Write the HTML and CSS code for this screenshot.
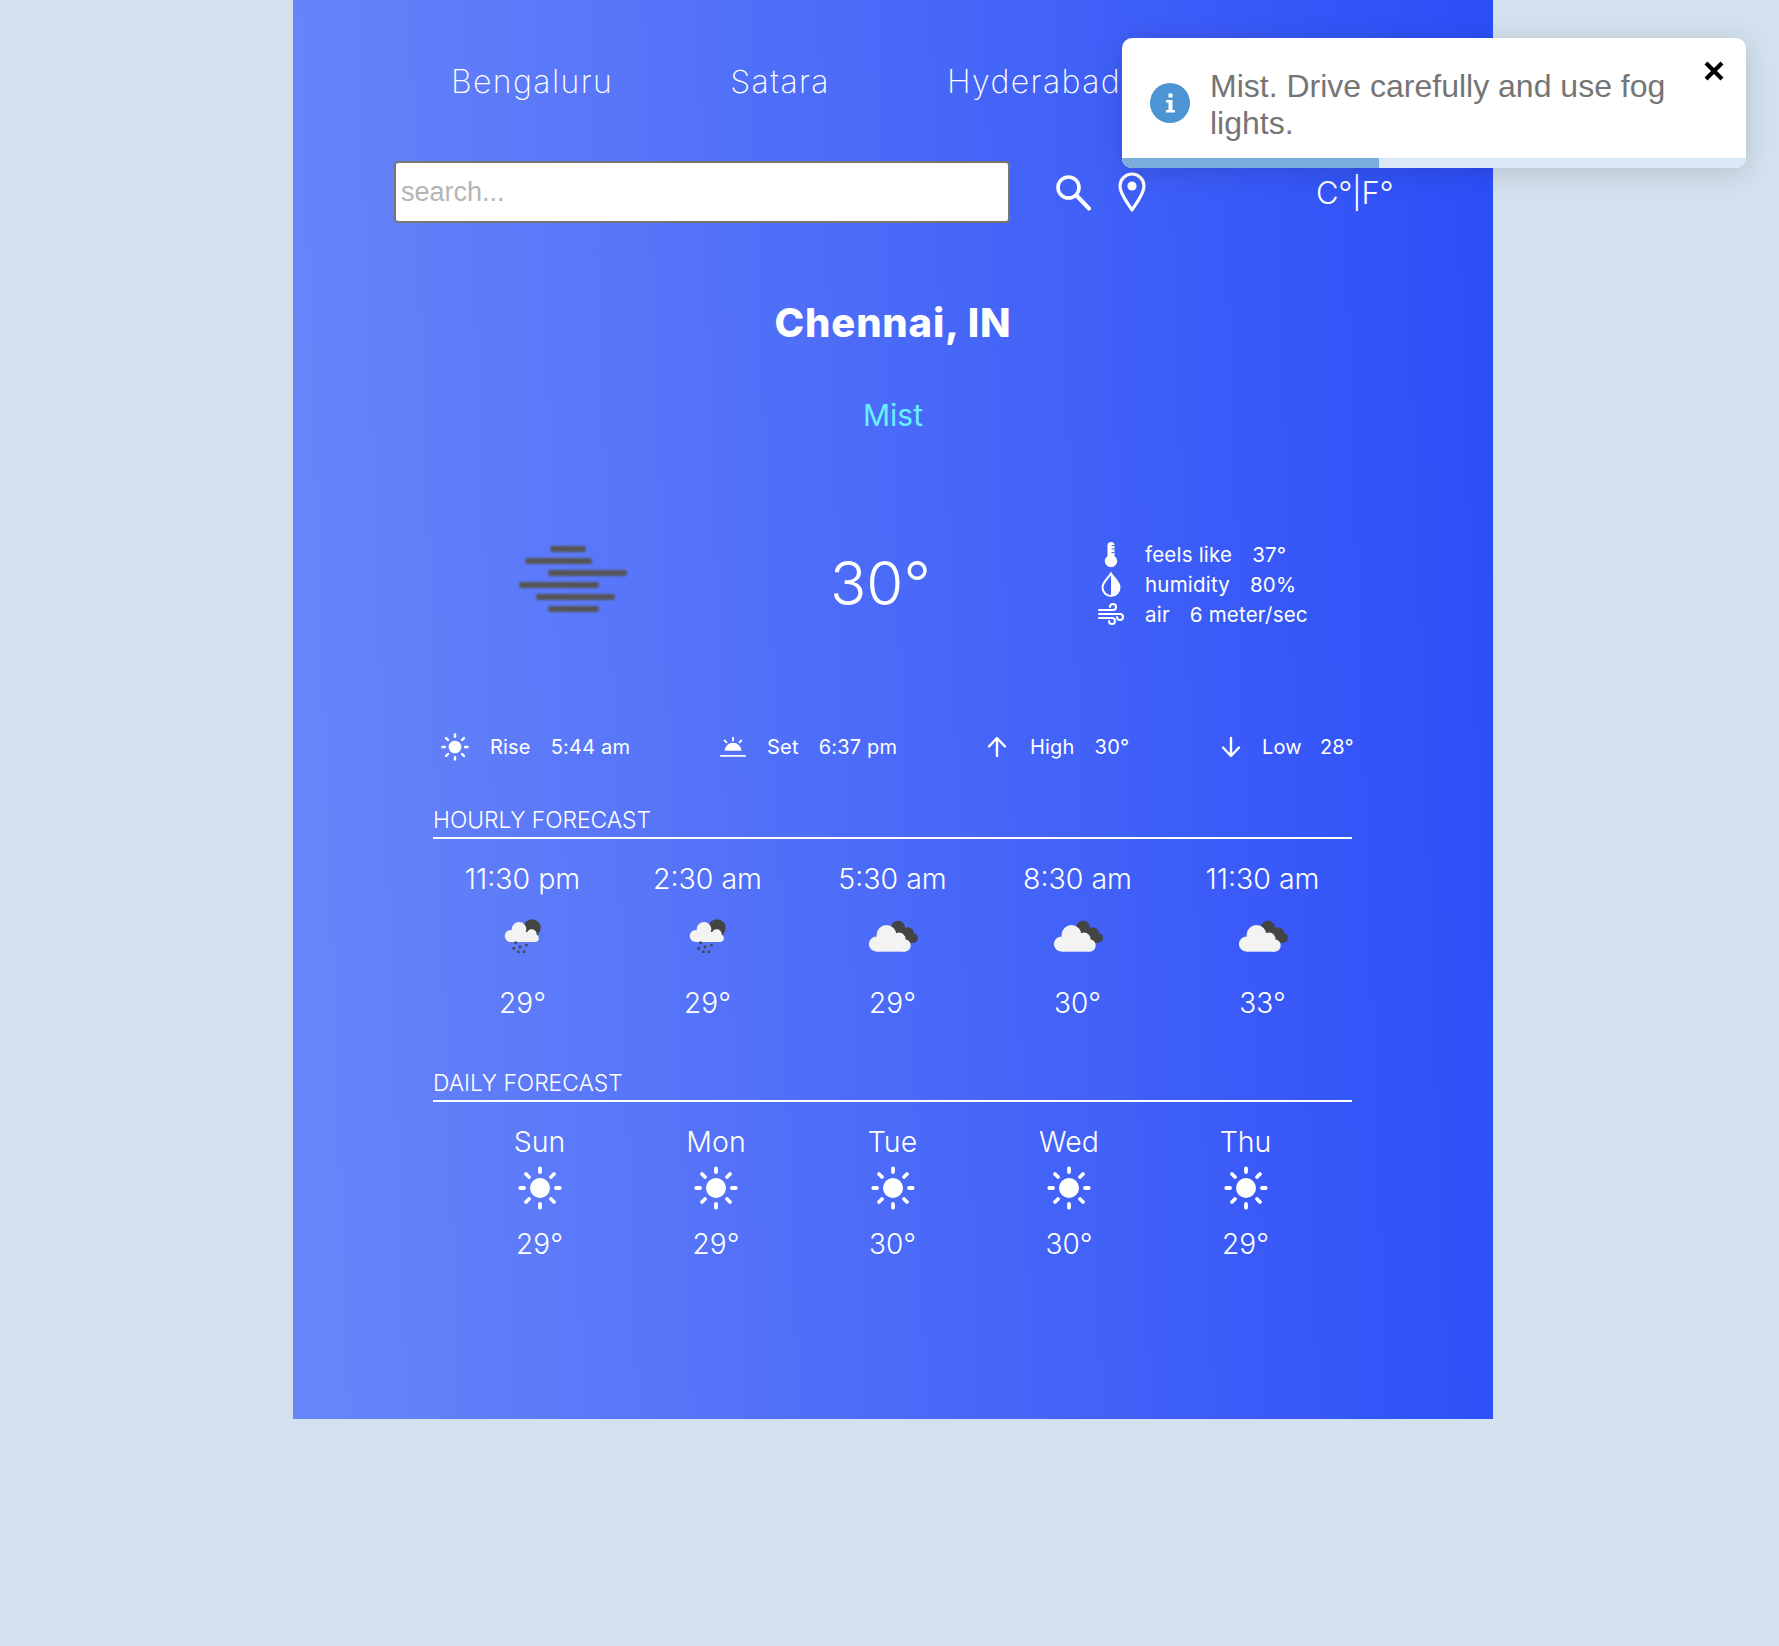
FILE: index.html
```html
<!DOCTYPE html>
<html lang="en">
<head>
<meta charset="utf-8">
<title>Weather</title>
<link rel="stylesheet" href="styles.css">
</head>
<body>
<svg class="defs" width="0" height="0" aria-hidden="true">
  <defs>
    <g id="sun">
      <circle cx="22" cy="22" r="10" fill="#fff"/>
      <path d="M22 2.300v3.700M22 38v3.700M2.300 22H6M38 22h3.700M8 8l3 3M36 8l-3 3M8 36l3-3M36 36l-3-3" stroke="#fff" stroke-width="3.800" stroke-linecap="round" fill="none"/>
    </g>
    <g id="cloudrain">
      <circle cx="34" cy="22" r="8.700" fill="#444"/>
      <g fill="#f3f3f3">
        <circle cx="12.700" cy="30" r="6"/>
        <circle cx="21" cy="23.300" r="7.300"/>
        <circle cx="33.700" cy="28.300" r="5"/>
        <circle cx="37" cy="32.300" r="3.800"/>
        <rect x="12.700" y="26" width="24" height="10"/>
      </g>
      <g fill="#444">
        <rect x="16.500" y="35.500" width="2.400" height="2.600"/>
        <rect x="14.500" y="41" width="2.400" height="2.800"/>
        <rect x="20.800" y="39.500" width="2.400" height="2.800"/>
        <rect x="27.200" y="38" width="2.400" height="2.400"/>
        <rect x="19.200" y="44.600" width="2.400" height="2.400"/>
        <rect x="24.800" y="44.600" width="2.400" height="2.400"/>
      </g>
    </g>
    <g id="clouds">
      <g fill="#444">
        <circle cx="30" cy="21.700" r="7"/>
        <circle cx="40" cy="27.300" r="6"/>
        <circle cx="45" cy="32" r="5"/>
        <rect x="26" y="24" width="19" height="13"/>
      </g>
      <g fill="#f3f3f3">
        <circle cx="8.500" cy="38" r="7.600"/>
        <circle cx="18.500" cy="29" r="10"/>
        <circle cx="31" cy="33" r="6.500"/>
        <circle cx="36.500" cy="39.500" r="6.200"/>
        <rect x="8.500" y="33" width="28" height="12.700"/>
      </g>
    </g>
  </defs>
</svg>
<main class="panel">
  <nav class="tabs">
    <span>Bengaluru</span>
    <span>Satara</span>
    <span>Hyderabad</span>
  </nav>
  <section class="search-row">
    <input class="search" type="text" placeholder="search...">
    <div class="search-icons">
      <svg width="38" height="38" viewBox="0 0 38 38" fill="none" stroke="#fff" stroke-width="3.600" stroke-linecap="round"><circle cx="14.500" cy="14.500" r="10.500"/><path d="M22.500 22.500 35 35.500" stroke-width="4"/></svg>
      <svg width="30" height="40" viewBox="0 0 30 40" fill="none"><path d="M15 38C10 30 3 22 3 14a12 12 0 0 1 24 0c0 8-7 16-12 24z" stroke="#fff" stroke-width="3.200" stroke-linejoin="round"/><circle cx="15" cy="14" r="4.600" fill="#fff"/></svg>
    </div>
    <div class="units">C°|F°</div>
  </section>
  <h1 class="city">Chennai, IN</h1>
  <p class="condition">Mist</p>
  <section class="current">
    <div class="mist" aria-hidden="true">
      <i class="b1"></i><i class="b2"></i><i class="b3"></i><i class="b4"></i><i class="b5"></i><i class="b6"></i>
    </div>
    <div class="temp">30°</div>
    <ul class="details">
      <li><svg width="26" height="26" viewBox="0 0 26 26"><path d="M9.500 4.500a3.500 3.500 0 0 1 7 0v10.400a6.200 6.200 0 1 1-7 0z" fill="#fff"/><path d="M13.500 4.500h3M13.500 8h3M13.500 11.500h3" stroke="#3f60f7" stroke-width="1.200"/></svg><span>feels like</span><span>37°</span></li>
      <li><svg width="26" height="26" viewBox="0 0 26 26"><path d="M13 2.500C10 7.500 4.500 11 4.500 16.500a8.500 8.500 0 0 0 17 0C21.500 11 16 7.500 13 2.500z" fill="none" stroke="#fff" stroke-width="2"/><path d="M13 2.500C16 7.500 21.500 11 21.500 16.500A8.500 8.500 0 0 1 13 25z" fill="#fff"/></svg><span>humidity</span><span>80%</span></li>
      <li><svg width="26" height="22" viewBox="0 0 26 22" fill="none" stroke="#fff" stroke-width="2" stroke-linecap="round"><path d="M1 7h14a3 3 0 1 0-3-3M1 11h21a3 3 0 1 1-3 3M1 15h13a3 3 0 1 1-3 3"/></svg><span>air</span><span>6 meter/sec</span></li>
    </ul>
  </section>
  <section class="sunrow">
    <div class="stat s1"><svg width="28" height="28" viewBox="0 0 44 44"><use href="#sun"/></svg><span>Rise</span><span>5:44 am</span></div>
    <div class="stat s2"><svg width="26" height="24" viewBox="0 0 28 24" fill="none" stroke="#fff" stroke-linecap="round"><path d="M5 16a9 8.500 0 0 1 18 0z" fill="#fff" stroke="none"/><path d="M1 21.500h26" stroke-width="2"/><path d="M14 2v3M5 5l2 2M23 5l-2 2" stroke-width="2"/></svg><span>Set</span><span>6:37 pm</span></div>
    <div class="stat s3"><svg width="24" height="24" viewBox="0 0 24 24" fill="none" stroke="#fff" stroke-width="2.400" stroke-linecap="round" stroke-linejoin="round"><path d="M12 21V4M4 11.500 12 3l8 8.500"/></svg><span>High</span><span>30°</span></div>
    <div class="stat s4"><svg width="24" height="24" viewBox="0 0 24 24" fill="none" stroke="#fff" stroke-width="2.400" stroke-linecap="round" stroke-linejoin="round"><path d="M12 3v17M4 12.500 12 21l8-8.500"/></svg><span>Low</span><span>28°</span></div>
  </section>
  <section class="forecast hourly">
    <h2>HOURLY FORECAST</h2>
    <div class="fc-row">
      <div class="fc-item"><div class="fc-label">11:30 pm</div><svg class="fc-icon" width="50" height="50" viewBox="0 0 50 50"><use href="#cloudrain"/></svg><div class="fc-temp">29°</div></div>
      <div class="fc-item"><div class="fc-label">2:30 am</div><svg class="fc-icon" width="50" height="50" viewBox="0 0 50 50"><use href="#cloudrain"/></svg><div class="fc-temp">29°</div></div>
      <div class="fc-item"><div class="fc-label">5:30 am</div><svg class="fc-icon" width="50" height="50" viewBox="0 0 50 50"><use href="#clouds"/></svg><div class="fc-temp">29°</div></div>
      <div class="fc-item"><div class="fc-label">8:30 am</div><svg class="fc-icon" width="50" height="50" viewBox="0 0 50 50"><use href="#clouds"/></svg><div class="fc-temp">30°</div></div>
      <div class="fc-item"><div class="fc-label">11:30 am</div><svg class="fc-icon" width="50" height="50" viewBox="0 0 50 50"><use href="#clouds"/></svg><div class="fc-temp">33°</div></div>
    </div>
  </section>
  <section class="forecast daily">
    <h2>DAILY FORECAST</h2>
    <div class="fc-row tight">
      <div class="fc-item"><div class="fc-label">Sun</div><svg class="fc-sun" width="44" height="44" viewBox="0 0 44 44"><use href="#sun"/></svg><div class="fc-temp">29°</div></div>
      <div class="fc-item"><div class="fc-label">Mon</div><svg class="fc-sun" width="44" height="44" viewBox="0 0 44 44"><use href="#sun"/></svg><div class="fc-temp">29°</div></div>
      <div class="fc-item"><div class="fc-label">Tue</div><svg class="fc-sun" width="44" height="44" viewBox="0 0 44 44"><use href="#sun"/></svg><div class="fc-temp">30°</div></div>
      <div class="fc-item"><div class="fc-label">Wed</div><svg class="fc-sun" width="44" height="44" viewBox="0 0 44 44"><use href="#sun"/></svg><div class="fc-temp">30°</div></div>
      <div class="fc-item"><div class="fc-label">Thu</div><svg class="fc-sun" width="44" height="44" viewBox="0 0 44 44"><use href="#sun"/></svg><div class="fc-temp">29°</div></div>
    </div>
  </section>
</main>
<aside class="toast" role="alert">
  <div class="toast-body">
    <svg class="toast-icon" width="40" height="40" viewBox="0 0 40 40"><circle cx="20" cy="20" r="20" fill="#4d94d5"/><path d="M16 17h6.500v10H25v2.500h-9V27h2.500v-7.500H16zM18.500 10.500h4v4h-4z" fill="#fff"/></svg>
    <p>Mist. Drive carefully and use fog lights.</p>
    <svg class="toast-close" width="24" height="24" viewBox="0 0 24 24"><path d="M4 4l16 16M20 4 4 20" stroke="#000" stroke-width="4.200"/></svg>
  </div>
  <div class="toast-track"><div class="toast-bar" style="width:41.2%"></div></div>
</aside>
</body>
</html>
```
FILE: styles.css
```css
* { box-sizing: border-box; }
html, body { margin: 0; padding: 0; }
body {
  min-height: 1646px;
  background: #d3e1ee;
  font-family: "Inter", "Liberation Sans", sans-serif;
  color: #fff;
  overflow: hidden;
}
.defs { position: absolute; }
.panel {
  width: 1200px;
  height: 1419px;
  margin-left: 293px;
  padding-top: 57px;
  background: linear-gradient(88deg, #6986f9 0%, #2c4ef7 100%);
}
.tabs {
  display: flex;
  gap: 117px;
  height: 48px;
  align-items: center;
  padding-left: 158px;
  font-size: 32px;
  font-weight: 200;
  letter-spacing: 1.400px;
  white-space: nowrap;
}
.search-row {
  display: flex;
  align-items: center;
  margin-top: 56px;
  padding-left: 101px;
}
.search {
  width: 616px;
  height: 62px;
  border: 2px solid #767676;
  border-radius: 4px;
  padding: 0 5px;
  font: 27px "Liberation Sans", sans-serif;
  background: #fff;
}
.search::placeholder { color: #b5b5b5; }
.search-icons {
  display: flex;
  align-items: center;
  gap: 25px;
  margin-left: 44px;
}
.units {
  margin-left: 169px;
  margin-top: 0;
  font-size: 31px;
  font-weight: 300;
  letter-spacing: -0.300px;
}
.city {
  margin: 76px 0 0;
  text-align: center;
  font-size: 40px;
  line-height: 48px;
  font-weight: 800;
  letter-spacing: 0.800px;
}
.condition {
  margin: 48px 0 0;
  text-align: center;
  font-size: 30px;
  line-height: 40px;
  font-weight: 400;
  color: #67f0ff;
}
.current {
  display: flex;
  align-items: center;
  margin-top: 102px;
  padding-left: 226px;
  height: 90px;
}
.mist { position: relative; width: 108px; height: 72px; filter: blur(0.8px); }
.mist i { position: absolute; display: block; height: 5.500px; border-radius: 3px; background: #555; }
.b1 { left: 31px; width: 36px; top: 0; }
.b2 { left: 6px; width: 67px; top: 12px; }
.b3 { left: 29px; width: 79px; top: 24px; }
.b4 { left: 0; width: 80px; top: 36px; }
.b5 { left: 17px; width: 79px; top: 48px; }
.b6 { left: 29px; width: 51px; top: 60px; }
.temp {
  margin-left: 203px;
  margin-top: 2px;
  width: 268px;
  font-size: 60px;
  font-weight: 300;
}
.details {
  list-style: none;
  margin: 4px 0 0;
  padding: 0;
  font-size: 20.500px;
  font-weight: 400;
  letter-spacing: 0.200px;
}
.details li {
  display: flex;
  align-items: center;
  height: 30px;
  gap: 20px;
}
.details svg { flex: none; margin-right: 1px; }
.sunrow {
  display: flex;
  align-items: center;
  margin-top: 105px;
  margin-left: 148px;
  width: 920px;
  height: 30px;
  font-size: 20px;
  font-weight: 400;
  letter-spacing: 0.200px;
}
.stat { display: flex; align-items: center; gap: 20px; }
.s1 { width: 279px; }
.s2 { width: 265px; }
.s3 { width: 234px; }
.s4 { gap: 18px; }
.stat svg { margin-right: 1px; }
.forecast { margin-left: 140px; width: 919px; }
.forecast h2 {
  margin: 0;
  border-bottom: 2px solid #fff;
  font-size: 22.800px;
  line-height: 35px;
  font-weight: 300;
}
.hourly { margin-top: 40px; }
.daily { margin-top: 0; }
.fc-row { display: grid; grid-template-columns: repeat(5, 185px); justify-content: center; padding-top: 22px; }
.fc-row.tight { grid-template-columns: repeat(5, 176.500px); padding-top: 22px; }
.fc-item { display: flex; flex-direction: column; align-items: center; }
.fc-label { font-size: 28.500px; line-height: 36px; font-weight: 300; }
.fc-icon { margin-top: 9px; }
.fc-temp { font-size: 28px; line-height: 36px; font-weight: 300; margin-top: 29px; margin-bottom: 44px; }
.fc-sun { margin-top: 6px; }
.tight .fc-temp { margin-top: 16px; }
.toast {
  position: absolute;
  left: 1122px;
  top: 38px;
  width: 624px;
  height: 130px;
  background: #fff;
  border-radius: 10px;
  overflow: hidden;
  box-shadow: 0 4px 28px rgba(0,0,0,.14);
  display: flex;
  flex-direction: column;
}
.toast-body { position: relative; flex: 1; display: flex; align-items: center; padding: 9px 70px 0 28px; }
.toast p {
  margin: 4px 0 0 20px;
  font: 32px/37px "Liberation Sans", sans-serif;
  color: #757575;
}
.toast-icon { flex: none; }
.toast-close { position: absolute; right: 20px; top: 21px; }
.toast-track { height: 10px; background: #dbe8f5; }
.toast-bar { height: 100%; background: #7aaddd; }
```
